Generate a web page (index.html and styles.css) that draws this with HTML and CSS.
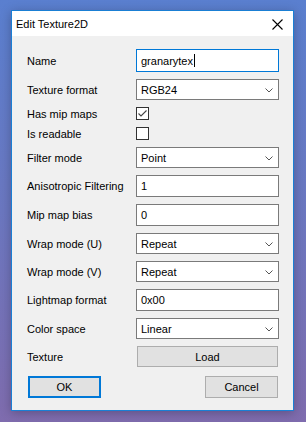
FILE: index.html
```html
<!DOCTYPE html>
<html lang="en">
<head>
  <meta charset="UTF-8" />
  <meta name="viewport" content="width=device-width, initial-scale=1.0" />
  <title>Edit Texture2D</title>
  <link rel="stylesheet" href="styles.css">
</head>
<body>
  <div class="window">
    <div class="titlebar">
      <span class="title">Edit Texture2D</span>
      <svg class="close" width="11" height="11" viewBox="0 0 11 11">
        <path d="M0.5 0.5 L10.5 10.5 M10.5 0.5 L0.5 10.5" stroke="#000" stroke-width="1.1" fill="none" />
      </svg>
    </div>

    <div class="content">
      <div class="row row-tall">
        <label class="label">Name</label>
        <div class="field input focused">granarytex<span class="caret"></span></div>
      </div>

      <div class="row">
        <label class="label">Texture format</label>
        <div class="field select">
          <span>RGB24</span>
          <svg class="chevron" width="8" height="5" viewBox="0 0 8 5"><path d="M0.5 0.5 L4 4 L7.5 0.5" stroke="#555" fill="none" /></svg>
        </div>
      </div>

      <div class="row row-check">
        <label class="label">Has mip maps</label>
        <span class="checkbox">
          <svg width="11" height="11" viewBox="0 0 11 11"><path d="M1.5 5.5 L4 8 L9.5 2.5" stroke="#444" stroke-width="1.1" fill="none" /></svg>
        </span>
      </div>

      <div class="row row-check">
        <label class="label">Is readable</label>
        <span class="checkbox"></span>
      </div>

      <div class="row">
        <label class="label">Filter mode</label>
        <div class="field select">
          <span>Point</span>
          <svg class="chevron" width="8" height="5" viewBox="0 0 8 5"><path d="M0.5 0.5 L4 4 L7.5 0.5" stroke="#555" fill="none" /></svg>
        </div>
      </div>

      <div class="row row-mid">
        <label class="label">Anisotropic Filtering</label>
        <div class="field input">1</div>
      </div>

      <div class="row row-mid">
        <label class="label">Mip map bias</label>
        <div class="field input">0</div>
      </div>

      <div class="row">
        <label class="label">Wrap mode (U)</label>
        <div class="field select">
          <span>Repeat</span>
          <svg class="chevron" width="8" height="5" viewBox="0 0 8 5"><path d="M0.5 0.5 L4 4 L7.5 0.5" stroke="#555" fill="none" /></svg>
        </div>
      </div>

      <div class="row">
        <label class="label">Wrap mode (V)</label>
        <div class="field select">
          <span>Repeat</span>
          <svg class="chevron" width="8" height="5" viewBox="0 0 8 5"><path d="M0.5 0.5 L4 4 L7.5 0.5" stroke="#555" fill="none" /></svg>
        </div>
      </div>

      <div class="row row-mid">
        <label class="label">Lightmap format</label>
        <div class="field input">0x00</div>
      </div>

      <div class="row">
        <label class="label">Color space</label>
        <div class="field select">
          <span>Linear</span>
          <svg class="chevron" width="8" height="5" viewBox="0 0 8 5"><path d="M0.5 0.5 L4 4 L7.5 0.5" stroke="#555" fill="none" /></svg>
        </div>
      </div>

      <div class="row">
        <label class="label">Texture</label>
        <button class="btn load">Load</button>
      </div>

      <div class="actions">
        <button class="btn ok">OK</button>
        <button class="btn">Cancel</button>
      </div>
    </div>
  </div>
</body>
</html>
```

FILE: styles.css
```css
body {
  margin: 0;
  width: 306px;
  height: 422px;
  padding: 10px 0 0 11px;
  box-sizing: border-box;
  background: linear-gradient(180deg, #5a7fcf 0%, #6b77c0 50%, #7f6cae 100%);
  font-family: 'Liberation Sans', Arial, sans-serif;
  font-size: 11px;
  color: #000;
  overflow: hidden;
}

.window {
  width: 283px;
  height: 401px;
  box-sizing: border-box;
  border: 1px solid #1a7fd4;
  background-color: #f0f0f0;
  box-shadow: 0 2px 10px rgba(0, 0, 0, 0.25);
}

.titlebar {
  height: 25px;
  display: flex;
  align-items: center;
  justify-content: space-between;
  padding: 1px 10px 0 4px;
  box-sizing: border-box;
  background-color: #fff;
}

.title {
  font-size: 11px;
}

.close {
  display: block;
  margin-top: 1px;
}

.content {
  display: flex;
  flex-direction: column;
  gap: 7px;
  padding: 13px 14px 0 15px;
}

.row {
  display: flex;
  align-items: center;
  height: 21px;
}

.row-tall {
  height: 23px;
}

.row-mid {
  height: 22px;
}

.row-check {
  height: 13px;
}

.label {
  width: 109px;
  flex-shrink: 0;
  white-space: nowrap;
}

.field {
  flex: 1;
  height: 100%;
  box-sizing: border-box;
  border: 1px solid #7a7a7a;
  background-color: #fff;
  display: flex;
  align-items: center;
  padding: 0 4px;
}

.focused {
  border-color: #0078d7;
}

.caret {
  display: inline-block;
  width: 1px;
  height: 13px;
  margin-left: 1px;
  background-color: #000;
}

.select {
  justify-content: space-between;
  padding-right: 5px;
}

.chevron {
  display: block;
  margin-top: 1px;
}

.checkbox {
  width: 13px;
  height: 13px;
  box-sizing: border-box;
  border: 1px solid #333;
  background-color: #fff;
  display: flex;
  align-items: center;
  justify-content: center;
}

.checkbox svg {
  display: block;
}

.btn {
  font-family: 'Liberation Sans', Arial, sans-serif;
  font-size: 11px;
  color: #000;
  background-color: #e1e1e1;
  border: 1px solid #adadad;
  padding: 0;
  height: 22px;
  width: 73px;
  box-sizing: border-box;
}

.load {
  width: 141px;
  height: 21px;
  margin-left: 1px;
  padding-top: 1px;
}

.actions {
  display: flex;
  justify-content: space-between;
  margin-top: 2px;
  padding: 0 1px;
}

.ok {
  border: 2px solid #0078d7;
}
```
